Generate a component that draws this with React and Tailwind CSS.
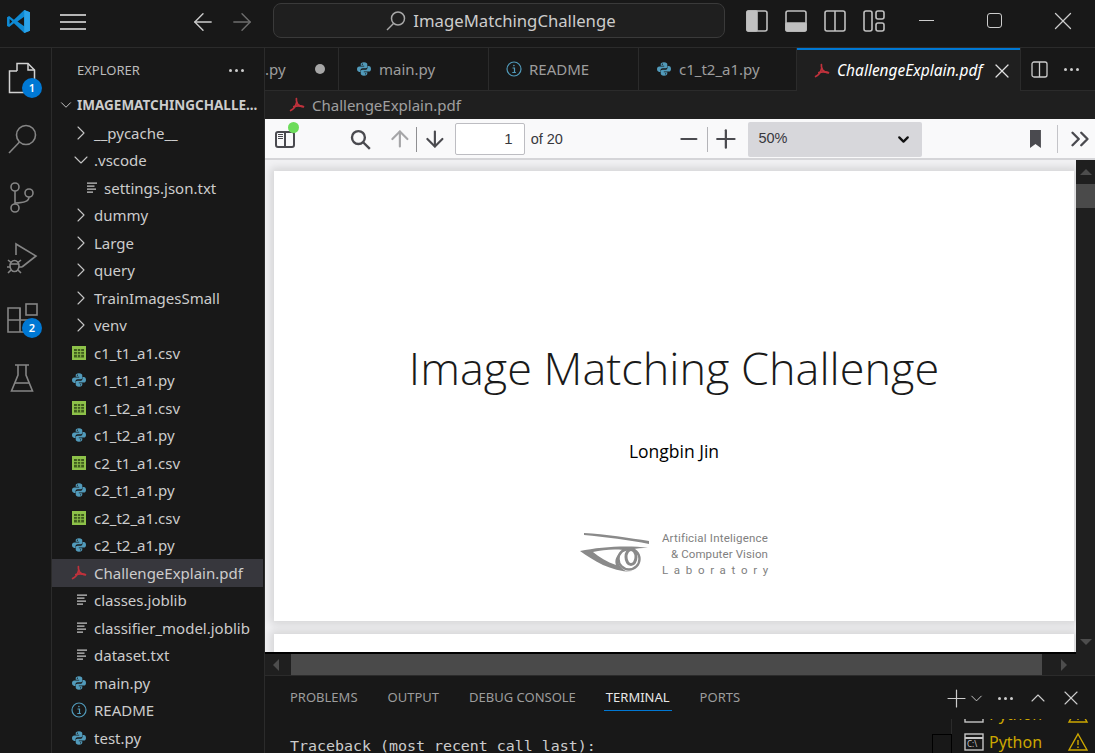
import { ArrowLeft, ArrowRight, ChevronDown, ChevronRight, ChevronUp, ChevronsRight, Minus, Plus, X } from 'lucide-react';

const UI = "font-['Noto_Sans',sans-serif]";

function PyIcon({ className = '' }) {
  const d = 'M8 1.2c-2.6 0-3.3 1-3.3 2.2v1.4h3.5v.6H3.3C1.9 5.4 1 6.5 1 8.1c0 1.7.9 2.8 2.2 2.8h1.3V9.3c0-1.2 1-2.1 2.2-2.1h2.9c1 0 1.7-.8 1.7-1.8V3.4c0-1.2-1-2.2-3.3-2.2z';
  return (
    <svg viewBox="0 0 16 16" className={`w-4 h-4 shrink-0 ${className}`} fill="#519aba">
      <path d={d} />
      <path d={d} transform="rotate(180 8 8)" />
      <circle cx="6.4" cy="3.2" r=".6" fill="#181818" />
      <circle cx="9.6" cy="12.8" r=".6" fill="#181818" />
    </svg>
  );
}

function PdfIcon({ className = '' }) {
  return (
    <svg viewBox="0 0 16 16" className={`w-4 h-4 shrink-0 ${className}`} fill="none" stroke="#c0323c" strokeWidth="1.7" strokeLinecap="round">
      <path d="M7.4 1.5c-.3 2 .2 3.5 1 5.2 1 1.7 3 2.8 6 3" />
      <path d="M7.6 5.4C7 8.6 4.6 12 1.6 13.6" />
      <path d="M4.8 9.6c3-.9 6-1 9.6.1" />
    </svg>
  );
}

function InfoIcon({ className = '' }) {
  return (
    <svg viewBox="0 0 16 16" className={`w-4 h-4 shrink-0 ${className}`} fill="none" stroke="#519aba" strokeWidth="1.2">
      <circle cx="8" cy="8" r="7" />
      <path d="M6.5 7h2v4.4M6.3 11.5h3.6" />
      <circle cx="7.9" cy="4.6" r=".8" fill="#519aba" stroke="none" />
    </svg>
  );
}

function LinesIcon({ className = '' }) {
  return (
    <svg viewBox="0 0 12 12" className={`w-3 h-3 shrink-0 ${className}`} stroke="#c5c5c5" strokeWidth="1.3">
      <path d="M1 1.2h10M1 4.2h7.5M1 7.2h9M1 10.2h6" />
    </svg>
  );
}

function CsvIcon({ className = '' }) {
  return (
    <svg viewBox="0 0 16 16" className={`w-4 h-4 shrink-0 ${className}`}>
      <rect x="1" y="1" width="14" height="14" fill="#8dc149" />
      <path d="M3 4h10v8.5H3z" fill="#3f5c1e" />
      <path d="M3 6.5h10M3 9.3h10M6.4 4v8.5M9.7 4v8.5" stroke="#8dc149" strokeWidth=".9" />
    </svg>
  );
}

function Dots({ className = '' }) {
  return (
    <span className={`flex gap-[3px] ${className}`}>
      <i className="w-[3px] h-[3px] rounded-full bg-[#cccccc]" />
      <i className="w-[3px] h-[3px] rounded-full bg-[#cccccc]" />
      <i className="w-[3px] h-[3px] rounded-full bg-[#cccccc]" />
    </span>
  );
}

const tree = [
  { name: '__pycache__', type: 'closed' },
  { name: '.vscode', type: 'open' },
  { name: 'settings.json.txt', type: 'settings' },
  { name: 'dummy', type: 'closed' },
  { name: 'Large', type: 'closed' },
  { name: 'query', type: 'closed' },
  { name: 'TrainImagesSmall', type: 'closed' },
  { name: 'venv', type: 'closed' },
  { name: 'c1_t1_a1.csv', type: 'csv' },
  { name: 'c1_t1_a1.py', type: 'py' },
  { name: 'c1_t2_a1.csv', type: 'csv' },
  { name: 'c1_t2_a1.py', type: 'py' },
  { name: 'c2_t1_a1.csv', type: 'csv' },
  { name: 'c2_t1_a1.py', type: 'py' },
  { name: 'c2_t2_a1.csv', type: 'csv' },
  { name: 'c2_t2_a1.py', type: 'py' },
  { name: 'ChallengeExplain.pdf', type: 'pdf', selected: true },
  { name: 'classes.joblib', type: 'lines' },
  { name: 'classifier_model.joblib', type: 'lines' },
  { name: 'dataset.txt', type: 'lines' },
  { name: 'main.py', type: 'py' },
  { name: 'README', type: 'info' },
  { name: 'test.py', type: 'py' },
];

function TreeIcon({ type }) {
  if (type === 'closed') return <ChevronRight size={24} strokeWidth={1.1} className="shrink-0 -ml-[2px] text-[#c5c5c5]" />;
  if (type === 'open') return <ChevronDown size={24} strokeWidth={1.1} className="shrink-0 -ml-[2px] text-[#c5c5c5]" />;
  if (type === 'csv') return <CsvIcon />;
  if (type === 'py') return <PyIcon />;
  if (type === 'pdf') return <PdfIcon />;
  if (type === 'info') return <InfoIcon />;
  return <LinesIcon className="ml-[5px]" />;
}

function TreeRow({ item }) {
  if (item.type === 'settings') {
    return (
      <div className="flex items-center h-[27.5px] shrink-0 pl-[34px] mr-[1px]">
        <LinesIcon className="mr-[6px]" />
        <span className="text-[15px] text-[#cccccc]">{item.name}</span>
      </div>
    );
  }
  return (
    <div className={`flex items-center h-[27.5px] shrink-0 pl-[19px] mr-[1px] ${item.selected ? 'bg-[#37373d]' : ''}`}>
      <div className="w-[23px] shrink-0 flex items-center">
        <TreeIcon type={item.type} />
      </div>
      <span className="text-[15px] text-[#cccccc] whitespace-nowrap">{item.name}</span>
    </div>
  );
}

function ActivityItem({ children, badge }) {
  return (
    <div className="relative h-[60px] w-full flex items-center justify-center pr-[5px]">
      {children}
      {badge && (
        <div className="absolute left-[22px] top-[30px] w-5 h-5 rounded-full bg-[#0078d4] text-white text-[11px] font-semibold flex items-center justify-center">
          {badge}
        </div>
      )}
    </div>
  );
}

function ActivityBar() {
  return (
    <div className="w-[52px] shrink-0 border-r border-[#2b2b2b] flex flex-col bg-[#181818]">
      <ActivityItem badge="1">
        <svg width="30" height="32" viewBox="0 0 30 32" fill="none" stroke="#d2d2d2" strokeWidth="1.5">
          <path d="M9 9V1.5h11l6.5 6.5v16H19" />
          <path d="M20 1.5V8h6.5" />
          <path d="M9 9H1.5v21.5H19V24" />
        </svg>
      </ActivityItem>
      <ActivityItem>
        <svg width="30" height="32" viewBox="0 0 30 32" fill="none" stroke="#858585" strokeWidth="1.6">
          <circle cx="18" cy="13" r="9.5" />
          <path d="M11.5 20L1 31" />
        </svg>
      </ActivityItem>
      <ActivityItem>
        <svg width="30" height="34" viewBox="0 0 30 34" fill="none" stroke="#858585" strokeWidth="1.6">
          <circle cx="7" cy="6" r="4" />
          <circle cx="7" cy="27" r="4" />
          <circle cx="21" cy="12" r="4" />
          <path d="M7 10v13M7 22c8 0 14-1 14-6" />
        </svg>
      </ActivityItem>
      <ActivityItem>
        <svg width="32" height="32" viewBox="0 0 32 32" fill="none" stroke="#858585" strokeWidth="1.6">
          <path d="M9 13V2l20 12-14 11" />
          <ellipse cx="7.5" cy="24" rx="4.5" ry="5.5" />
          <path d="M3 22h9M1 18l3 2.5M14 18l-3 2.5M0 25h3M12 25h3M1 31l3-3M14 31l-3-3" />
        </svg>
      </ActivityItem>
      <ActivityItem badge="2">
        <svg width="32" height="32" viewBox="0 0 32 32" fill="none" stroke="#858585" strokeWidth="1.6">
          <path d="M1 6h12v24H1zM1 18h24v12H13" />
          <path d="M13 18V6" />
          <rect x="19" y="2" width="11" height="11" />
        </svg>
      </ActivityItem>
      <ActivityItem>
        <svg width="26" height="30" viewBox="0 0 26 30" fill="none" stroke="#858585" strokeWidth="1.6">
          <path d="M5 2h14M8 2v10L1.5 28h21L16 12V2" />
          <path d="M5 20h14" />
        </svg>
      </ActivityItem>
    </div>
  );
}

function Sidebar() {
  return (
    <div className="w-[213px] shrink-0 border-r border-[#2b2b2b] bg-[#181818] overflow-hidden flex flex-col">
      <div className="flex items-center justify-between h-[43px] shrink-0 pl-[25px] pr-[20px] pt-[2px]">
        <span className="text-[13px] text-[#bbbbbb]">EXPLORER</span>
        <Dots />
      </div>
      <div className="flex items-center h-[28px] shrink-0 pl-[5px]">
        <ChevronDown size={18} strokeWidth={1.3} className="text-[#c5c5c5] mr-[2px]" />
        <span className="text-[13.5px] font-bold text-[#cccccc] whitespace-nowrap">IMAGEMATCHINGCHALLE...</span>
      </div>
      {tree.map((item) => (
        <TreeRow key={item.name} item={item} />
      ))}
    </div>
  );
}

function TitleBar() {
  return (
    <div className="h-[48px] shrink-0 bg-[#181818] border-b border-[#2b2b2b] flex items-center">
      <svg viewBox="0 0 24 24" className="w-[25px] h-[25px] ml-[6px] mr-[29px] mb-[4px]">
        <path d="M17.5 1L7.6 10.3 3 6.8 1 7.8v8.4l2 1 4.6-3.5 9.9 9.3 5.5-2.2V3.2z" fill="#0e8ad4" />
        <path d="M17.5 7.5v9L11 12z" fill="#181818" />
        <path d="M17.5 1L23 3.2v17.6L17.5 23z" fill="#2aa3ea" />
        <path d="M3.5 9.5L6 12l-2.5 2.5z" fill="#181818" />
      </svg>
      <div className="flex flex-col gap-[5px] w-[26px] mr-[103px] mb-[4px]">
        <i className="h-[2px] bg-[#b5b5b5]" />
        <i className="h-[2px] bg-[#b5b5b5]" />
        <i className="h-[2px] bg-[#b5b5b5]" />
      </div>
      <ArrowLeft size={28} strokeWidth={1.2} className="text-[#cccccc] mr-[11px] mb-[4px]" />
      <ArrowRight size={28} strokeWidth={1.2} className="text-[#6e6e6e] mr-[17px] mb-[4px]" />
      <div className="w-[452px] h-[35px] mb-[6px] rounded-[8px] border border-[#3a3a3a] bg-[#1f1f1f] flex items-center justify-center">
        <svg width="22" height="22" viewBox="0 0 22 22" fill="none" stroke="#a8a8a8" strokeWidth="1.5" className="mr-[6px] ml-[3px]">
          <circle cx="13" cy="8.5" r="6.5" />
          <path d="M8.5 13.5L2 20" />
        </svg>
        <span className="text-[16.7px] text-[#cccccc] pt-[1px]">ImageMatchingChallenge</span>
      </div>
      <div className="flex items-center ml-[21px] gap-[17px] mb-[5px]">
        <svg width="22" height="22" viewBox="0 0 22 22" fill="none" stroke="#c0c0c0" strokeWidth="1.6">
          <rect x="1" y="1" width="20" height="20" rx="2" />
          <rect x="1" y="1" width="10" height="20" rx="1" fill="#c0c0c0" />
        </svg>
        <svg width="22" height="22" viewBox="0 0 22 22" fill="none" stroke="#c0c0c0" strokeWidth="1.6">
          <rect x="1" y="1" width="20" height="20" rx="2" />
          <rect x="1" y="13" width="20" height="8" rx="1" fill="#c0c0c0" />
        </svg>
        <svg width="22" height="22" viewBox="0 0 22 22" fill="none" stroke="#c0c0c0" strokeWidth="1.6">
          <rect x="1" y="1" width="20" height="20" rx="2" />
          <path d="M11 1v20" />
        </svg>
        <svg width="22" height="22" viewBox="0 0 22 22" fill="none" stroke="#c0c0c0" strokeWidth="1.6">
          <rect x="1" y="1" width="8" height="20" rx="2" />
          <rect x="13" y="1" width="8" height="8" rx="2" />
          <rect x="13" y="13" width="8" height="8" rx="2" />
        </svg>
      </div>
      <i className="w-[15px] h-[1.5px] bg-[#cccccc] ml-[34px] mb-[6px]" />
      <i className="w-[15px] h-[15px] rounded-[3px] border-[1.5px] border-[#cccccc] ml-[53px] mb-[6px]" />
      <X size={30} strokeWidth={1.05} className="text-[#cccccc] ml-[46px] mb-[6px]" />
    </div>
  );
}

function Tab({ width, icon, name }) {
  return (
    <div style={{ width }} className="h-full shrink-0 flex items-center border-r border-b border-[#2b2b2b] pl-[17px]">
      {icon}
      <span className="ml-[7px] text-[15px] text-[#9d9d9d] whitespace-nowrap">{name}</span>
    </div>
  );
}

function TabBar() {
  return (
    <div className="h-[43px] shrink-0 flex bg-[#181818]">
      <div className="w-[74px] h-full shrink-0 flex items-center justify-between border-r border-b border-[#2b2b2b] pr-[13px]">
        <span className="text-[15px] text-[#9d9d9d]">.py</span>
        <i className="w-[10px] h-[10px] rounded-full bg-[#a6a6a6]" />
      </div>
      <Tab width={150} icon={<PyIcon />} name="main.py" />
      <Tab width={150} icon={<InfoIcon />} name="README" />
      <Tab width={158} icon={<PyIcon />} name="c1_t2_a1.py" />
      <div className="w-[223px] shrink-0 h-full flex items-center bg-[#1f1f1f] border-t-2 border-[#0078d4] pl-[17px] pr-[6px]">
        <PdfIcon />
        <span className="ml-[7px] text-[15.5px] italic text-white whitespace-nowrap">ChallengeExplain.pdf</span>
        <X size={24} strokeWidth={1.2} className="ml-auto text-[#e0e0e0]" />
      </div>
      <div className="flex-1 flex items-center border-b border-l border-[#2b2b2b] pl-[10px]">
        <svg width="17" height="17" viewBox="0 0 17 17" fill="none" stroke="#cccccc" strokeWidth="1.3">
          <rect x="1" y="1" width="15" height="15" rx="2" />
          <path d="M8.5 1v15" />
        </svg>
        <Dots className="ml-[16px]" />
      </div>
    </div>
  );
}

function PdfToolbar() {
  return (
    <div className="h-[41px] shrink-0 bg-[#f9f9fa] border-b-2 border-[#d5d5d8] flex items-center pt-[1px] text-[#38383d] font-['Liberation_Sans',sans-serif]">
      <div className="relative ml-[10px] w-[20px] h-[17px] rounded-[3px] border-2 border-[#4a4a4f] flex">
        <div className="w-[9px] border-r-2 border-[#4a4a4f] flex flex-col gap-[1px] pt-[1px] pl-[1px]">
          <i className="w-[5px] h-[1px] bg-[#4a4a4f]" />
          <i className="w-[5px] h-[1px] bg-[#4a4a4f]" />
          <i className="w-[5px] h-[1px] bg-[#4a4a4f]" />
        </div>
        <i className="absolute left-[11px] -top-[11px] w-[11px] h-[11px] rounded-full bg-[#6ddc5a]" />
      </div>
      <svg width="21" height="21" viewBox="0 0 21 21" fill="none" stroke="#4a4a4f" strokeWidth="2.4" className="ml-[55px]">
        <circle cx="8.5" cy="8.5" r="6.5" />
        <path d="M13.5 13.5L20 20" />
      </svg>
      <ArrowRight size={26} strokeWidth={2} className="ml-[16px] -rotate-90 text-[#a6a6a8]" />
      <i className="w-[1px] h-[25px] bg-[#8f8f92] ml-[4px]" />
      <ArrowRight size={26} strokeWidth={2} className="ml-[5px] rotate-90 text-[#4a4a4f]" />
      <div className="ml-[7px] w-[70px] h-[32px] rounded-[2px] border border-[#bdbdc2] bg-white flex items-center justify-end pr-[11px] text-[15px]">1</div>
      <span className="ml-[6px] text-[14.5px] whitespace-nowrap pt-[1px]">of 20</span>
      <Minus size={26} strokeWidth={2} className="ml-[113px] text-[#4a4a4f]" />
      <i className="w-[1px] h-[25px] bg-[#b4b4b8] ml-[5px]" />
      <Plus size={30} strokeWidth={1.8} className="ml-[3px] text-[#4a4a4f]" />
      <div className="ml-[8px] w-[175px] h-[35px] rounded-[2px] bg-[#d7d7db] flex items-center justify-between pl-[10px] pr-[10px] text-[14.5px]">
        50%
        <ChevronDown size={17} strokeWidth={3.2} className="text-[#111111]" />
      </div>
      <svg width="11" height="18" viewBox="0 0 11 18" fill="#4a4a4f" className="ml-[108px]">
        <path d="M0 0h11v18l-5.5-4L0 18z" />
      </svg>
      <i className="w-[1px] h-[28px] bg-[#c4c4c8] ml-[16px]" />
      <ChevronsRight size={30} strokeWidth={1.9} className="ml-[7px] shrink-0 text-[#4a4a4f]" />
    </div>
  );
}

function EyeLogo() {
  return (
    <svg width="70" height="40" viewBox="0 0 70 40" className="shrink-0 mb-[2px]">
      <path d="M4 0C25 1 50 5 69 8v3C50 7 25 4 4 2z" fill="#8a8a8a" />
      <path d="M0 18C20 14 48 12 68 15c-13 0-20 2-25 4-7 4-7 14 3 19l6 1C30 38 14 28 0 18z" fill="#8a8a8a" />
      <path d="M13 19c9-2 20-3 30-2-6 4-9 10-7 15-9-3-17-8-23-13z" fill="#ffffff" />
      <circle cx="49" cy="26" r="10.5" fill="none" stroke="#8a8a8a" strokeWidth="2.4" />
      <ellipse cx="51" cy="24" rx="5" ry="7.5" fill="none" stroke="#8a8a8a" strokeWidth="3" />
    </svg>
  );
}

function PdfPage({ children }) {
  return (
    <div className="w-[800px] h-[450px] shrink-0 bg-white shadow-[0_0_8px_3px_rgba(0,0,0,0.12)] flex flex-col items-center">
      {children}
    </div>
  );
}

function PdfViewer() {
  return (
    <div className="flex-1 min-h-0 flex flex-col">
      <div className="flex-1 min-h-0 flex bg-[#000000]">
        <div className="flex-1 min-w-0 overflow-hidden bg-[#f1f1f3] pl-[9px] pt-[11px] flex flex-col gap-[13px] mb-[2px]">
          <PdfPage>
            <h1 className="mt-[164px] text-[45px] leading-[66px] font-light text-[#1a1a1a] font-['Open_Sans',sans-serif] whitespace-nowrap">Image Matching Challenge</h1>
            <p className="mt-[38px] text-[17.5px] leading-[24px] text-black font-['Open_Sans',sans-serif]">Longbin Jin</p>
            <div className="mt-[67px] flex items-center gap-[10px] text-[#808080] font-['Roboto',sans-serif]">
              <EyeLogo />
              <div className="w-[108px] text-right text-[11.5px] leading-[16px]">
                <div className="whitespace-nowrap tracking-[0.2px]">Artificial Inteligence</div>
                <div className="whitespace-nowrap tracking-[0.1px]">&amp; Computer Vision</div>
                <div className="whitespace-nowrap tracking-[5.7px] -mr-[6px]">Laboratory</div>
              </div>
            </div>
          </PdfPage>
          <PdfPage />
        </div>
        <div className="w-[19px] shrink-0 bg-[#1f1f1f] flex flex-col items-center relative">
          <i className="mt-[9px] w-0 h-0 border-x-[6px] border-x-transparent border-b-[6px] border-b-[#4d4d4d]" />
          <i className="mt-[9px] w-full h-[24px] bg-[#4a4a4a]" />
          <i className="mt-auto mb-[9px] w-0 h-0 border-x-[6px] border-x-transparent border-t-[6px] border-t-[#4d4d4d]" />
        </div>
      </div>
      <div className="h-[22px] shrink-0 bg-[#1f1f1f] flex items-center border-b border-[#2b2b2b]">
        <i className="ml-[8px] w-0 h-0 border-y-[6px] border-y-transparent border-r-[6px] border-r-[#4d4d4d]" />
        <i className="ml-[12px] w-[751px] h-full bg-[#4a4a4a]" />
        <i className="ml-[19px] w-0 h-0 border-y-[6px] border-y-transparent border-l-[6px] border-l-[#4d4d4d]" />
      </div>
    </div>
  );
}

function TerminalRow() {
  return (
    <div className="flex items-center h-[28px] shrink-0">
      <svg width="20" height="20" viewBox="0 0 20 20" fill="none" stroke="#c5c5c5" strokeWidth="1.4">
        <rect x="1" y="2" width="18" height="16" />
        <path d="M1 6h18" strokeWidth="2" />
        <text x="3" y="15" fontSize="8" fill="#c5c5c5" stroke="none">C:\</text>
      </svg>
      <span className="ml-[5px]">Python</span>
      <svg width="22" height="20" viewBox="0 0 22 20" fill="none" stroke="#cca700" strokeWidth="1.4" className="ml-[25px]">
        <path d="M11 2l9 16H2z" />
        <path d="M11 8v5M11 14.5v1.5" />
      </svg>
    </div>
  );
}

function Panel() {
  return (
    <div className="h-[77px] shrink-0 bg-[#181818] flex flex-col overflow-hidden">
      <div className="h-[43px] shrink-0 flex items-center pl-[25px] pt-[1px] text-[13px] text-[#9d9d9d]">
        <span>PROBLEMS</span>
        <span className="ml-[30px]">OUTPUT</span>
        <span className="ml-[30px]">DEBUG CONSOLE</span>
        <span className="ml-[30px] text-[#e7e7e7] relative">
          TERMINAL
          <i className="absolute -left-[2px] -right-[2px] top-[22px] h-[1px] bg-[#0078d4]" />
        </span>
        <span className="ml-[30px]">PORTS</span>
        <div className="ml-auto flex items-center text-[#cccccc]">
          <Plus size={29} strokeWidth={1} className="-mr-[4px]" />
          <ChevronDown size={19} strokeWidth={1.2} className="-mr-[2px]" />
          <Dots className="ml-[14px]" />
          <ChevronUp size={24} strokeWidth={1.1} className="ml-[13px] -mr-[2px]" />
          <X size={24} strokeWidth={1.1} className="ml-[11px] mr-[12px]" />
        </div>
      </div>
      <div className="flex-1 min-h-0 flex relative">
        <pre className="pl-[25px] pt-[17px] flex-1 text-[14.95px] leading-[20px] text-[#cccccc] font-['DejaVu_Sans_Mono',monospace]">Traceback (most recent call last):</pre>
        <i className="absolute left-[667px] top-[15px] w-[20px] h-[30px] border border-black" />
        <div className="w-[144px] shrink-0 border-l border-[#2b2b2b] pl-[12px] text-[16px] text-[#cca700] flex flex-col justify-end overflow-hidden">
          <div className="-mb-[3px]">
            <TerminalRow />
            <TerminalRow />
          </div>
        </div>
      </div>
    </div>
  );
}

export default function App() {
  return (
    <div className={`w-[1095px] h-[753px] overflow-hidden flex flex-col bg-[#181818] ${UI}`}>
      <TitleBar />
      <div className="flex-1 min-h-0 flex">
        <ActivityBar />
        <Sidebar />
        <div className="flex-1 min-w-0 flex flex-col">
          <TabBar />
          <div className="h-[28px] shrink-0 bg-[#1f1f1f] flex items-center pl-[24px]">
            <PdfIcon />
            <span className="ml-[7px] text-[15px] text-[#a0a0a0]">ChallengeExplain.pdf</span>
          </div>
          <PdfToolbar />
          <PdfViewer />
          <Panel />
        </div>
      </div>
    </div>
  );
}
